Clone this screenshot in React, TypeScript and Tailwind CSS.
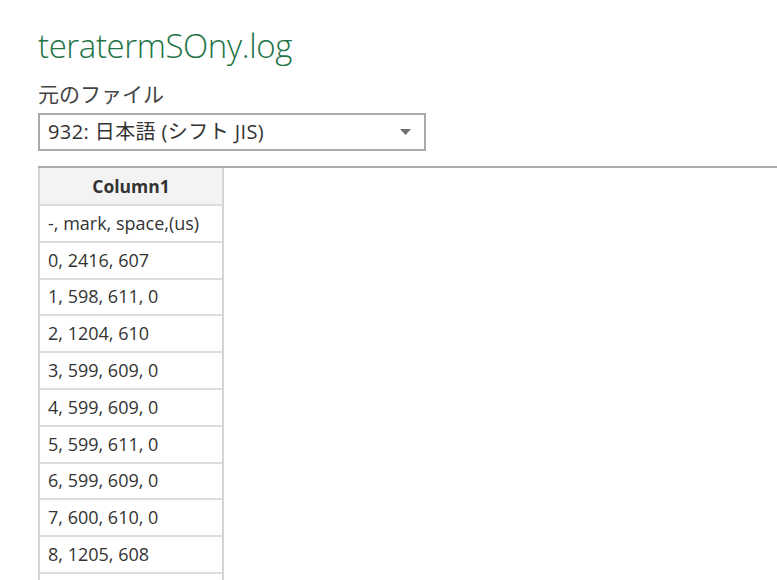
const rows = [
  '-, mark, space,(us)',
  '0, 2416, 607',
  '1, 598, 611, 0',
  '2, 1204, 610',
  '3, 599, 609, 0',
  '4, 599, 609, 0',
  '5, 599, 611, 0',
  '6, 599, 609, 0',
  '7, 600, 610, 0',
  '8, 1205, 608',
  '',
]

const font = { fontFamily: '"Open Sans", "Noto Sans CJK JP", sans-serif' }

export default function App() {
  return (
    <div className="w-[777px] h-[580px] overflow-hidden bg-white pl-[38px] pt-[25px]" style={font}>
      <h1 className="text-[33px] font-light text-[#217346] leading-[42px] tracking-[-0.4px]">
        teratermSOny.log
      </h1>

      <div className="mt-[13px] text-[21px] text-[#444] leading-[28px]">元のファイル</div>

      <div className="mt-[5px] w-[388px] h-[38px] border-2 border-[#ababab] flex items-center pl-[8px] pr-[13px]">
        <span className="flex-1 text-[20px] text-[#333] leading-none tracking-[0.4px]">932: 日本語 (シフト JIS)</span>
        <svg width="11" height="6" viewBox="0 0 11 6">
          <path d="M0 0 H11 L5.5 6 Z" fill="#6f6f6f" />
        </svg>
      </div>

      <div className="mt-[15px] border-t-2 border-[#ababab]">
        <div className="w-[186px] border-l-2 border-r-2 border-[#d4d4d4]">
          <div className="h-[36px] bg-[#f3f3f3] flex items-center justify-center text-[17.5px] font-bold text-[#333]">
            Column1
          </div>
          {rows.map((r, i) => (
            <div
              key={i}
              className="h-[36.8px] border-t-2 border-[#dcdcdc] flex items-center pl-[8px] text-[18px] text-[#333] whitespace-nowrap"
            >
              {r}
            </div>
          ))}
        </div>
      </div>
    </div>
  )
}
